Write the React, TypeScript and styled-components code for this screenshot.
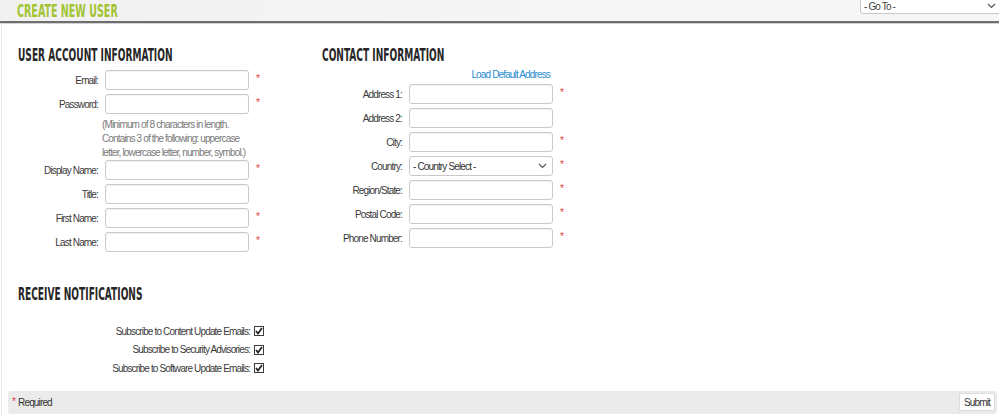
import React from "react";
import styled, { createGlobalStyle } from "styled-components";

const Global = createGlobalStyle`
  html, body { margin: 0; padding: 0; background: #fff; }
  body {
    font-family: "Liberation Sans", Arial, sans-serif;
    font-size: 10px;
    letter-spacing: -0.85px;
    color: #333;
  }
  * { box-sizing: border-box; }
`;

const Page = styled.div`
  width: 999px;
  height: 417px;
  overflow: hidden;
  display: flex;
  flex-direction: column;
`;

const Header = styled.header`
  height: 23px;
  flex: none;
  display: flex;
  justify-content: space-between;
  align-items: flex-start;
  background: linear-gradient(90deg, #f0f0f0 0%, #f5f5f5 40%, #f6f6f6 100%);
  border-bottom: 2px solid #6e6e6e;
  box-shadow: 0 1px 0 #d2d2d2;
  overflow: hidden;
`;

const Heading = styled.h2<{ $color?: string; $scale?: number }>`
  margin: 0;
  height: 20px;
  font-family: "DejaVu Sans Condensed", "Liberation Sans", sans-serif;
  font-weight: 700;
  font-size: 18px;
  line-height: 20px;
  letter-spacing: 0;
  color: ${(p) => p.$color ?? "#262626"};
  display: inline-block;
  transform: scaleX(${(p) => p.$scale ?? 0.56});
  transform-origin: left center;
  white-space: nowrap;
`;

const TitleWrap = styled.div`
  margin: 0 0 0 17px;
  height: 21px;
  display: flex;
  align-items: center;
`;

const GoTo = styled.div`
  margin-top: -2px;
  margin-right: -4px;
  width: 143px;
  height: 16px;
  background: #fff;
  border: 1px solid #c8c8c8;
  border-radius: 3px;
  display: flex;
  align-items: center;
  justify-content: space-between;
  padding: 0 6px 0 3px;
  color: #444;
`;

const Main = styled.main`
  flex: 1;
  display: flex;
  flex-direction: column;
  margin-left: 1px;
  border-left: 1px solid #ececec;
`;

const Columns = styled.div`
  display: flex;
  padding: 22px 0 0 16px;
`;

const Column = styled.section<{ $width?: number }>`
  width: ${(p) => (p.$width ? `${p.$width}px` : "auto")};
  flex: none;
  display: flex;
  flex-direction: column;
`;

const Rows = styled.div<{ $top: number }>`
  margin-top: ${(p) => p.$top}px;
  display: flex;
  flex-direction: column;
`;

const Row = styled.div`
  display: flex;
  align-items: center;
  height: 20px;
  margin-bottom: 4px;
`;

const Label = styled.label`
  width: 80px;
  flex: none;
  text-align: right;
  color: #3a3a3a;
  white-space: nowrap;
`;

const Input = styled.input`
  margin: 0 0 0 7px;
  width: 144px;
  height: 20px;
  border: 1px solid #c9c9c9;
  border-radius: 3px;
  background: #fff;
  box-shadow: inset 0 1px 1px rgba(0, 0, 0, 0.05);
  font-family: inherit;
  font-size: inherit;
  padding: 0 4px;
  outline: none;
`;

const SelectBox = styled.div`
  margin-left: 7px;
  width: 144px;
  height: 20px;
  border: 1px solid #c9c9c9;
  border-radius: 3px;
  background: #fff;
  display: flex;
  align-items: center;
  justify-content: space-between;
  padding: 0 5px 0 3px;
  color: #333;
`;

const Req = styled.span`
  margin-left: 7px;
  color: #e03a3a;
  font-size: 10px;
  line-height: 10px;
  align-self: flex-start;
  margin-top: 4px;
`;

const Help = styled.p`
  margin: 0 0 0 84px;
  width: 170px;
  color: #7a7a7a;
  line-height: 14px;
  height: 42px;
  white-space: nowrap;
`;

const LinkRow = styled.div`
  width: 230px;
  margin-top: 3px;
  height: 16px;
  text-align: right;
  padding-right: 2px;
  line-height: 14px;
`;

const Link = styled.a`
  color: #1f8dd0;
  text-decoration: none;
`;

const Notifications = styled.section`
  margin: 28px 0 0 16px;
  display: flex;
  flex-direction: column;
`;

const CheckRows = styled.div`
  margin-top: 18px;
  display: flex;
  flex-direction: column;
`;

const CheckRow = styled.label`
  display: flex;
  align-items: center;
  height: 18.5px;
`;

const CheckText = styled.span`
  width: 232px;
  text-align: right;
  color: #3a3a3a;
  white-space: nowrap;
`;

const Box = styled.span`
  margin-left: 4px;
  width: 10px;
  height: 10px;
  border: 1px solid #3a3a3a;
  background: #fff;
  display: inline-flex;
  align-items: center;
  justify-content: center;
`;

const Footer = styled.footer`
  margin: 13px 2px 0 6px;
  height: 23px;
  flex: none;
  background: #ebebeb;
  border-radius: 3px;
  display: flex;
  align-items: center;
  justify-content: space-between;
  padding: 0 2px 0 4px;
`;

const RequiredNote = styled.span`
  color: #333;
  display: flex;
  align-items: flex-start;
  gap: 3px;
`;

const Star = styled.span`
  color: #e03a3a;
  font-size: 10px;
  line-height: 9px;
`;

const Submit = styled.button`
  height: 18px;
  padding: 0 4px;
  background: #fff;
  border: 1px solid #dcdcdc;
  border-radius: 2px;
  font-family: inherit;
  font-size: inherit;
  letter-spacing: inherit;
  color: #333;
`;

const Chevron = () => (
  <svg width="9" height="6" viewBox="0 0 9 6">
    <polyline points="1,1 4.5,4.5 8,1" fill="none" stroke="#555" strokeWidth="1.2" />
  </svg>
);

const Check = () => (
  <svg width="8" height="8" viewBox="0 0 8 8">
    <polyline points="1,4 3,6.5 7,1" fill="none" stroke="#222" strokeWidth="1.7" />
  </svg>
);

type Field = { label: string; required?: boolean; select?: string };

const FieldRow = ({ f }: { f: Field }) => (
  <Row>
    <Label>{f.label}</Label>
    {f.select ? (
      <SelectBox>
        <span>{f.select}</span>
        <Chevron />
      </SelectBox>
    ) : (
      <Input type={f.label.startsWith("Password") ? "password" : "text"} />
    )}
    {f.required && <Req>*</Req>}
  </Row>
);

const contact: Field[] = [
  { label: "Address 1:", required: true },
  { label: "Address 2:" },
  { label: "City:", required: true },
  { label: "Country:", required: true, select: "- Country Select -" },
  { label: "Region/State:", required: true },
  { label: "Postal Code:", required: true },
  { label: "Phone Number:", required: true },
];

const userAfter: Field[] = [
  { label: "Display Name:", required: true },
  { label: "Title:" },
  { label: "First Name:", required: true },
  { label: "Last Name:", required: true },
];

const subs = [
  "Subscribe to Content Update Emails:",
  "Subscribe to Security Advisories:",
  "Subscribe to Software Update Emails:",
];

export default function App() {
  return (
    <Page>
      <Global />
      <Header>
        <TitleWrap>
          <Heading as="h1" $color="#a2c432" $scale={0.59}>
            CREATE NEW USER
          </Heading>
        </TitleWrap>
        <GoTo>
          <span>- Go To -</span>
          <Chevron />
        </GoTo>
      </Header>
      <Main>
        <Columns>
          <Column $width={304}>
            <Heading>USER ACCOUNT INFORMATION</Heading>
            <Rows $top={5}>
              <FieldRow f={{ label: "Email:", required: true }} />
              <FieldRow f={{ label: "Password:", required: true }} />
              <Help>
                (Minimum of 8 characters in length.
                <br />
                Contains 3 of the following: uppercase
                <br />
                letter, lowercase letter, number, symbol.)
              </Help>
              {userAfter.map((f) => (
                <FieldRow key={f.label} f={f} />
              ))}
            </Rows>
          </Column>
          <Column>
            <Heading>CONTACT INFORMATION</Heading>
            <LinkRow>
              <Link href="#">Load Default Address</Link>
            </LinkRow>
            <Rows $top={0}>
              {contact.map((f) => (
                <FieldRow key={f.label} f={f} />
              ))}
            </Rows>
          </Column>
        </Columns>
        <Notifications>
          <Heading>RECEIVE NOTIFICATIONS</Heading>
          <CheckRows>
            {subs.map((s) => (
              <CheckRow key={s}>
                <CheckText>{s}</CheckText>
                <Box>
                  <Check />
                </Box>
              </CheckRow>
            ))}
          </CheckRows>
        </Notifications>
        <Footer>
          <RequiredNote>
            <Star>*</Star>
            <span>Required</span>
          </RequiredNote>
          <Submit>Submit</Submit>
        </Footer>
      </Main>
    </Page>
  );
}
